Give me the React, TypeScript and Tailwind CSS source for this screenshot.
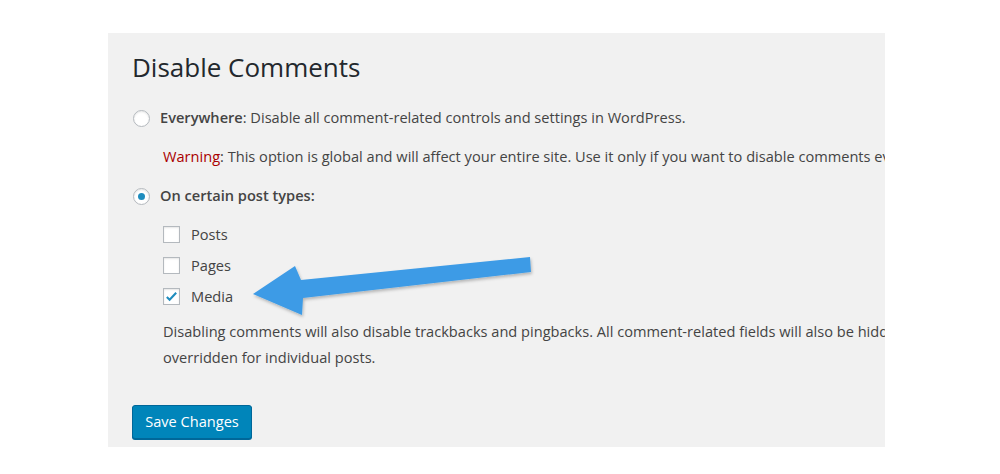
import { useState } from "react";

const postTypes = [
  { id: "post", label: "Posts" },
  { id: "page", label: "Pages" },
  { id: "attachment", label: "Media" },
];

function Radio({ checked }: { checked: boolean }) {
  return (
    <span className="flex h-[17px] w-[17px] shrink-0 items-center justify-center rounded-full border border-[#b4b9be] bg-white shadow-[inset_0_1px_2px_rgba(0,0,0,0.1)]">
      {checked && <span className="h-[7px] w-[7px] rounded-full bg-[#1e8cbe]" />}
    </span>
  );
}

function Checkbox({ checked }: { checked: boolean }) {
  return (
    <span className="flex h-[17px] w-[17px] shrink-0 items-center justify-center border border-[#b4b9be] bg-white shadow-[inset_0_1px_2px_rgba(0,0,0,0.1)]">
      {checked && (
        <svg viewBox="0 0 16 16" className="h-[15px] w-[15px]">
          <path d="M3 8.5l3 3 7-7.5" fill="none" stroke="#1e8cbe" strokeWidth="2.2" />
        </svg>
      )}
    </span>
  );
}

function Arrow() {
  return (
    <svg className="pointer-events-none absolute left-0 top-0" width="1000" height="474">
      <defs>
        <filter id="arrow-shadow" x="-10%" y="-30%" width="120%" height="160%">
          <feDropShadow dx="1" dy="2" stdDeviation="1.5" floodColor="#000" floodOpacity="0.25" />
        </filter>
      </defs>
      <polygon
        points="253,294 295,266 301,280 530,257 531,272 303,298 302,315"
        fill="#3d9be6"
        filter="url(#arrow-shadow)"
      />
    </svg>
  );
}

export default function App() {
  const [mode] = useState<"everywhere" | "selected">("selected");
  const [types] = useState<string[]>(["attachment"]);

  return (
    <div
      className="relative h-[474px] w-full bg-white pl-[108px] pt-[33px] text-[14.6px] text-[#444]"
      style={{ fontFamily: '"Open Sans", "Noto Sans", sans-serif' }}
    >
      <div className="h-[414px] w-[777px] overflow-hidden bg-[#f1f1f1] pl-6 pt-[18px]">
        <h1 className="h-8 text-[26px] leading-8 text-[#23282d]">Disable Comments</h1>

        <label className="mt-[23px] flex h-6 items-center gap-[10px] pl-px">
          <Radio checked={mode === "everywhere"} />
          <span className="whitespace-nowrap">
            <strong className="font-semibold">Everywhere</strong>: Disable all comment-related controls and
            settings in WordPress.
          </span>
        </label>

        <p className="mt-[15px] flex h-6 items-center whitespace-nowrap pl-[31px]">
          <span>
            <span className="text-[#a00]">Warning</span>: This option is global and will affect your entire site.
            Use it only if you want to disable comments everywhere. A complete description of what this option
            does is available here.
          </span>
        </p>

        <label className="mt-[15px] flex h-6 items-center gap-[10px] pl-px">
          <Radio checked={mode === "selected"} />
          <strong className="font-semibold">On certain post types:</strong>
        </label>

        <ul className="mt-[11px] pl-[31px]">
          {postTypes.map((t) => (
            <li key={t.id} className="flex h-[31px] items-center gap-[11px]">
              <Checkbox checked={types.includes(t.id)} />
              <span>{t.label}</span>
            </li>
          ))}
        </ul>

        <div className="mt-[6px] pl-[31px] leading-[26px]">
          <p className="whitespace-nowrap">
            Disabling comments will also disable trackbacks and pingbacks. All comment-related fields will also
            be hidden from the edit/quick-edit screens of the affected posts. These settings cannot be
          </p>
          <p className="whitespace-nowrap">overridden for individual posts.</p>
        </div>

        <button className="mt-[35px] h-[34px] w-[120px] rounded-[3px] border border-[#006799] bg-[#0085ba] text-white shadow-[0_1px_0_#006799]">
          Save Changes
        </button>
      </div>
      <Arrow />
    </div>
  );
}
